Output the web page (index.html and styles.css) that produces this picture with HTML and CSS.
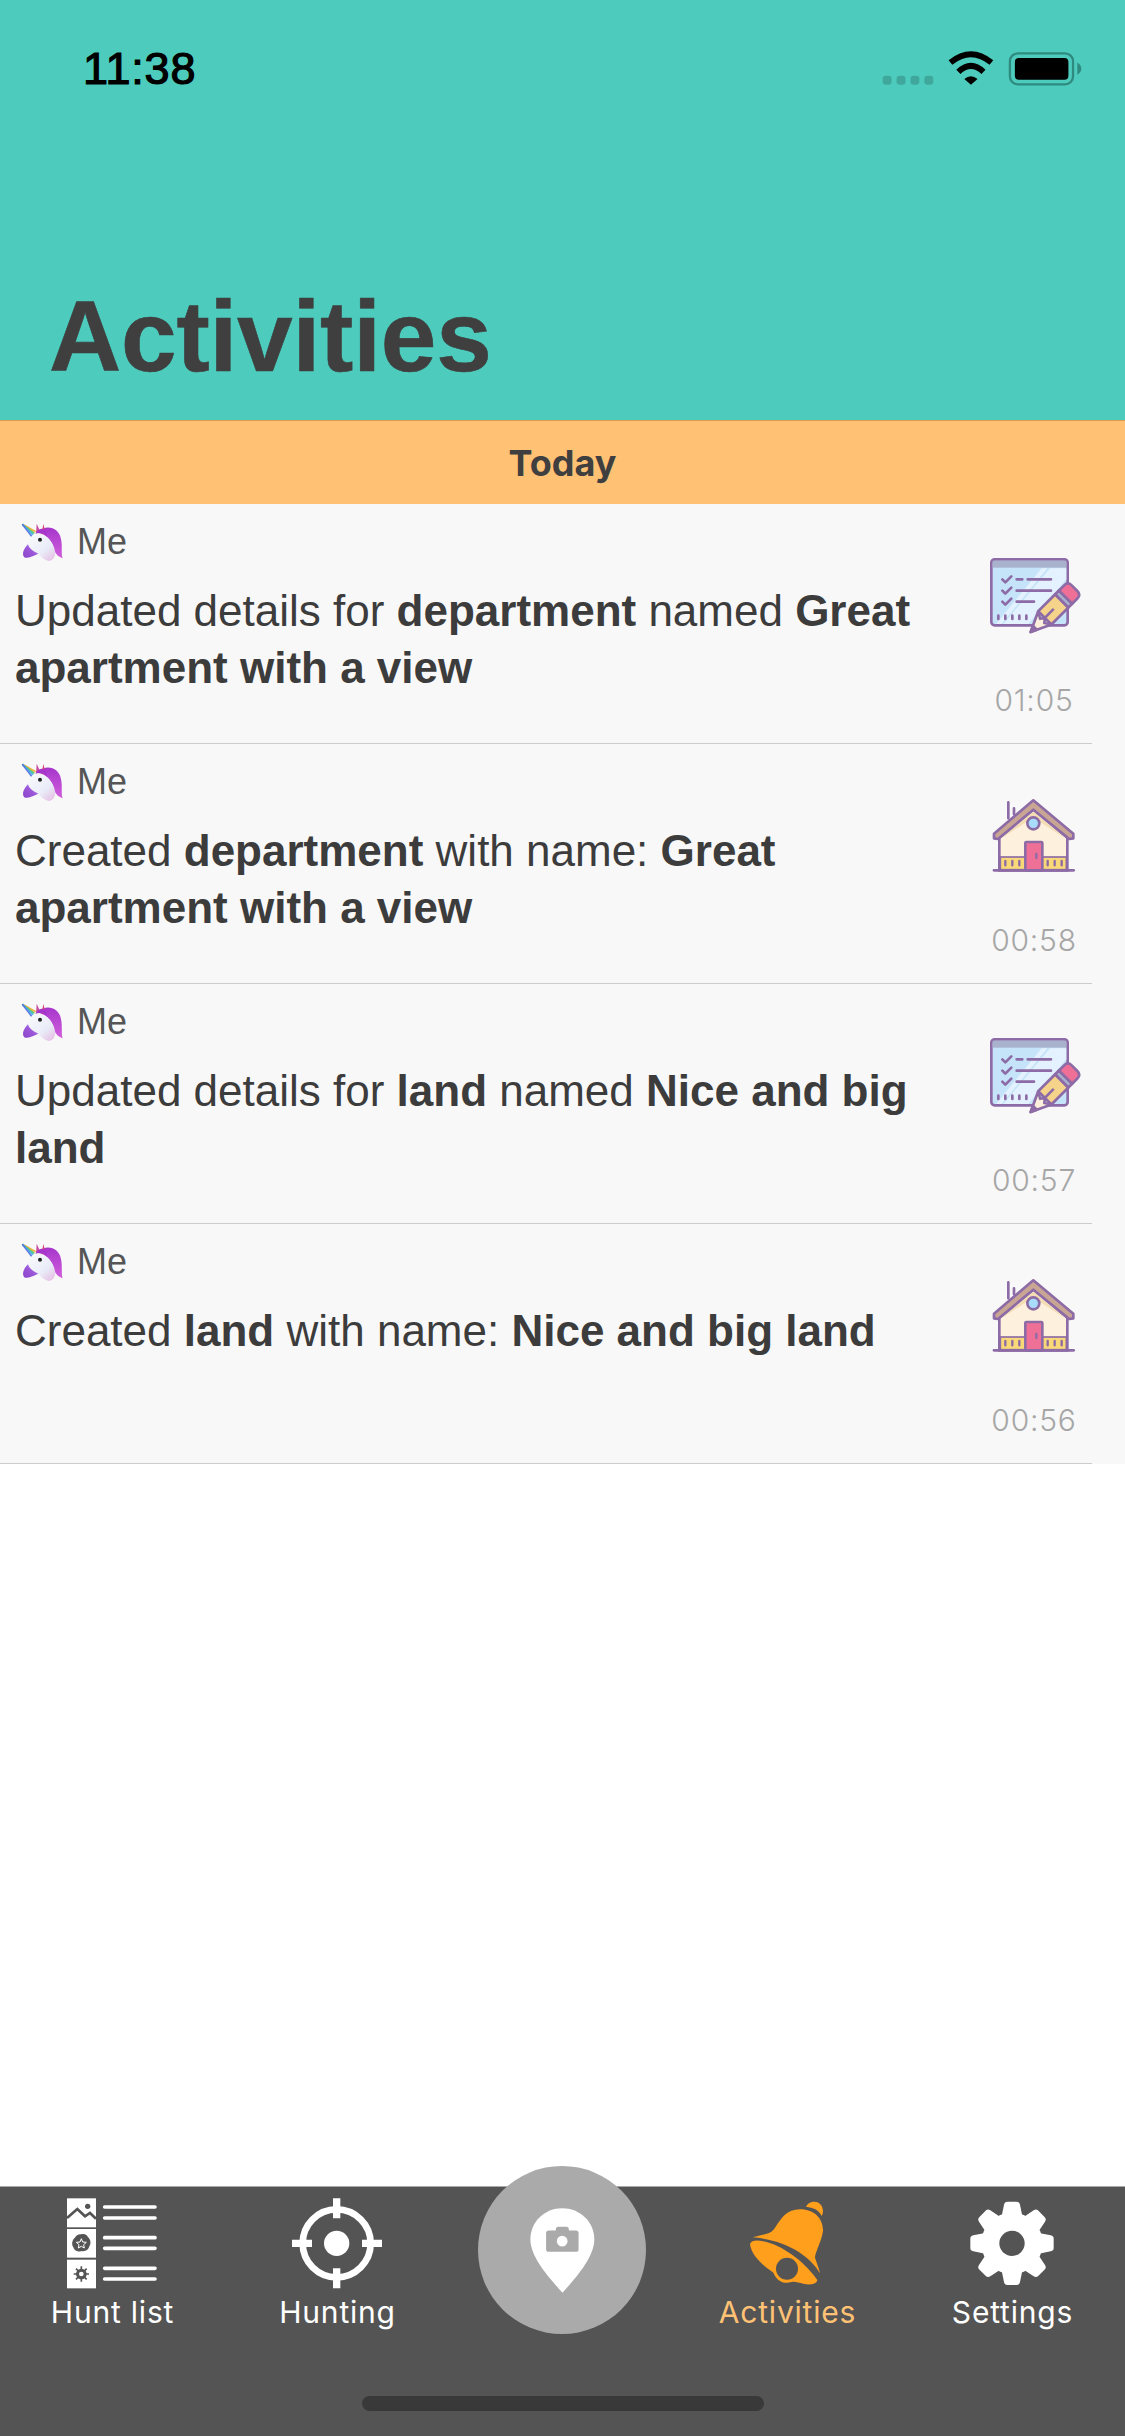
FILE: index.html
```html
<!DOCTYPE html>
<html>
<head>
  <title>Activities</title>
  <meta charset="utf8">
  <link rel="stylesheet" href="styles.css">
</head>
<body>
<svg class="sprite" xmlns="http://www.w3.org/2000/svg">
  <defs>
    <linearGradient id="faceGrad" x1="0" y1="0" x2="1" y2="1">
      <stop offset="0" stop-color="#ffffff"/>
      <stop offset="0.65" stop-color="#e9ecf8"/>
      <stop offset="1" stop-color="#e6b9e0"/>
    </linearGradient>
    <linearGradient id="maneGrad" x1="0" y1="0" x2="0" y2="1">
      <stop offset="0" stop-color="#a636cc"/>
      <stop offset="1" stop-color="#d05fdc"/>
    </linearGradient>
    <linearGradient id="noseGrad" x1="1" y1="0" x2="0" y2="1">
      <stop offset="0" stop-color="#c9a6ec"/>
      <stop offset="0.5" stop-color="#9a55d8"/>
      <stop offset="1" stop-color="#8a45c8"/>
    </linearGradient>
  </defs>
  <symbol id="unicorn" viewBox="60 60 135 126">
    <path d="M116 88C145 70 178 82 183 115C188 135 183 160 188 172C176 168 168 160 163 150C158 125 145 102 116 100Z" fill="url(#maneGrad)"/>
    <path d="M110 95C135 95 160 120 165 150C168 165 160 178 148 180C135 178 125 170 115 158C100 165 85 172 75 170C66 165 66 150 75 140C85 122 95 100 110 95Z" fill="url(#faceGrad)"/>
    <path d="M84 130C88 144 102 152 115 158C100 165 85 172 75 170C66 165 66 148 84 130Z" fill="url(#noseGrad)"/>
    <path d="M108 97L110 68L120 90Z" fill="#c94f9f"/>
    <path d="M125 100L130 68L137 97Z" fill="#d9457f"/>
    <path d="M106 98C115 84 125 80 138 88L142 106C130 96 120 94 106 98Z" fill="#a636cc"/>
    <path d="M67 70L107 92" stroke="#f2b13c" stroke-width="5"/>
    <path d="M67 70L103 97" stroke="#5cc46c" stroke-width="5"/>
    <path d="M67 70L99 101" stroke="#45b9e0" stroke-width="5"/>
    <path d="M67 70L95 106" stroke="#5a7be0" stroke-width="5"/>
    <circle cx="120" cy="116" r="6" fill="#222"/>
  </symbol>
  <symbol id="ic-edit" viewBox="75 60 288 270">
    <rect x="94" y="85" width="229" height="198" rx="10" fill="#c5e3f9" stroke="#8d6ba6" stroke-width="8"/>
    <path d="M130 279L270 112H319V145L205 279Z" fill="#e3f2fe"/>
    <path d="M108 279L245 112H262L125 279Z" fill="#e3f2fe"/>
    <rect x="98" y="89" width="221" height="21" fill="#a9b2cc"/>
    <g fill="none" stroke="#8d6ba6" stroke-width="8" stroke-linecap="round" stroke-linejoin="round">
      <path d="M127 145L136 154L154 136M127 179L136 188L154 170M127 212L136 221L154 203"/>
      <path d="M170 145H187M203 145H273M170 179H273M170 212H222"/>
      <path d="M115 254V264M136 254V264M157 254V264M178 254V264M199 254V264"/>
    </g>
    <g transform="translate(212 303) rotate(-45)" stroke="#8d6ba6" stroke-width="8" stroke-linejoin="round">
      <path d="M60 -28H132V28H60Z" fill="#f6d38a"/>
      <path d="M132 -28H148V28H132Z" fill="#a9b2cc"/>
      <path d="M148 -28H170Q186 -28 186 -12V12Q186 28 170 28H148Z" fill="#ef7096"/>
      <path d="M0 0L60 -28L48 -8L60 0L48 10L60 28Z" fill="#fdf0dc"/>
      <path d="M0 0L18 -8V8Z" fill="#8d6ba6"/>
      <path d="M60 0H98" fill="none"/>
    </g>
  </symbol>
  <symbol id="ic-house" viewBox="75 30 288 270">
    <path d="M145 64V112M162 82V100" stroke="#8d6ba6" stroke-width="8" stroke-linecap="round"/>
    <path d="M118 170L220 85L322 170V268H118Z" fill="#fdf0dc" stroke="#8d6ba6" stroke-width="8"/>
    <path d="M124 172L220 92L316 172L220 110Z" fill="#f4dcb3"/>
    <path d="M102 158L220 58L340 158V172L328 174L220 86L114 174L102 172Z" fill="#c9a594" stroke="#8d6ba6" stroke-width="8" stroke-linejoin="round"/>
    <rect x="121" y="228" width="198" height="38" fill="#f9d977" stroke="#8d6ba6" stroke-width="5"/>
    <path d="M136 240V253M157 240V253M178 240V253M263 240V253M284 240V253M305 240V253" stroke="#8d6ba6" stroke-width="7" stroke-linecap="round"/>
    <rect x="196" y="183" width="51" height="85" rx="3" fill="#ef7096" stroke="#8d6ba6" stroke-width="8"/>
    <path d="M229 219V231" stroke="#8d6ba6" stroke-width="7" stroke-linecap="round"/>
    <circle cx="220" cy="127" r="18" fill="#a9dcfb" stroke="#8d6ba6" stroke-width="8"/>
    <path d="M102 268H341" stroke="#8d6ba6" stroke-width="8" stroke-linecap="round"/>
  </symbol>
</svg>

<div class="screen">
  <header class="top">
    <div class="status">
      <span class="clock">11:38</span>
      <svg class="status-icons" viewBox="60 30 610 115">
        <g fill="#3fa79b">
          <rect x="66" y="108" width="27" height="27" rx="10"/>
          <rect x="108" y="108" width="27" height="27" rx="10"/>
          <rect x="150" y="108" width="27" height="27" rx="10"/>
          <rect x="192" y="108" width="27" height="27" rx="10"/>
        </g>
        <path d="M271 68Q333 18 395 68M295 96Q333 60 371 96" fill="none" stroke="#000" stroke-width="18"/>
        <path d="M313 118L333 135L353 118Q333 101 313 118Z" fill="#000"/>
        <rect x="451" y="40" width="191" height="94" rx="24" fill="none" stroke="#2f8a80" stroke-width="7"/>
        <rect x="466" y="54" width="162" height="66" rx="12" fill="#000"/>
        <path d="M655 68Q667 75 667 87Q667 98 655 105Z" fill="#2f8a80"/>
      </svg>
    </div>
    <h1 class="title">Activities</h1>
  </header>

  <div class="day">Today</div>

  <main class="list">
    <div class="row">
      <div class="row-in">
        <div class="row-main">
          <div class="who"><svg class="avatar"><use href="#unicorn"/></svg><span>Me</span></div>
          <p class="msg">Updated details for <b>department</b> named <b>Great</b> <b>apartment with a view</b></p>
        </div>
        <div class="row-side">
          <svg class="kind"><use href="#ic-edit"/></svg>
          <span class="time">01:05</span>
        </div>
      </div>
    </div>
    <div class="row">
      <div class="row-in">
        <div class="row-main">
          <div class="who"><svg class="avatar"><use href="#unicorn"/></svg><span>Me</span></div>
          <p class="msg">Created <b>department</b> with name: <b>Great</b> <b>apartment with a view</b></p>
        </div>
        <div class="row-side">
          <svg class="kind"><use href="#ic-house"/></svg>
          <span class="time">00:58</span>
        </div>
      </div>
    </div>
    <div class="row">
      <div class="row-in">
        <div class="row-main">
          <div class="who"><svg class="avatar"><use href="#unicorn"/></svg><span>Me</span></div>
          <p class="msg">Updated details for <b>land</b> named <b>Nice and big</b> <b>land</b></p>
        </div>
        <div class="row-side">
          <svg class="kind"><use href="#ic-edit"/></svg>
          <span class="time">00:57</span>
        </div>
      </div>
    </div>
    <div class="row">
      <div class="row-in">
        <div class="row-main">
          <div class="who"><svg class="avatar"><use href="#unicorn"/></svg><span>Me</span></div>
          <p class="msg">Created <b>land</b> with name: <b>Nice and big land</b></p>
        </div>
        <div class="row-side">
          <svg class="kind"><use href="#ic-house"/></svg>
          <span class="time">00:56</span>
        </div>
      </div>
    </div>
  </main>

  <nav class="tabbar">
    <div class="tabs">
      <div class="tab">
        <svg class="tab-ic" viewBox="195 140 285 285">
          <g fill="#fff">
            <rect x="201" y="147" width="87" height="87"/>
            <rect x="201" y="239" width="87" height="86"/>
            <rect x="201" y="331" width="87" height="86"/>
          </g>
          <path d="M314 173H465M314 206H465M314 265H465M314 297H465M314 357H465M314 389H465" stroke="#fff" stroke-width="11" stroke-linecap="round"/>
          <path d="M201 206L232 179L255 201L270 191L288 208" fill="none" stroke="#545454" stroke-width="8"/>
          <circle cx="263" cy="171" r="8" fill="#545454"/>
          <path d="M244 255C254 252 262 258 264 264C272 270 274 284 268 291C266 302 254 308 244 305C232 310 222 302 220 294C214 286 216 272 224 266C228 258 236 254 244 255Z" fill="#545454"/>
          <path d="M244 268L248 278L259 279L251 286L253 296L244 291L235 296L237 286L229 279L240 278Z" fill="none" stroke="#fff" stroke-width="3"/>
          <path d="M244 351V397M221 374H267M228 358L260 390M260 358L228 390" stroke="#545454" stroke-width="5"/>
          <circle cx="244" cy="374" r="16" fill="#545454"/>
          <circle cx="244" cy="374" r="7" fill="#fff"/>
        </svg>
        <span class="tab-label">Hunt list</span>
      </div>
      <div class="tab">
        <svg class="tab-ic" viewBox="870 140 285 285">
          <circle cx="1010" cy="282" r="102" fill="none" stroke="#fff" stroke-width="20"/>
          <circle cx="1010" cy="282" r="38" fill="#fff"/>
          <path d="M1010 147V207M1010 357V417M876 282H936M1086 282H1146" stroke="#fff" stroke-width="22"/>
        </svg>
        <span class="tab-label">Hunting</span>
      </div>
      <div class="tab"></div>
      <div class="tab">
        <svg class="tab-ic" viewBox="120 140 285 285">
          <path d="M318 172C325 155 355 150 365 170C372 185 368 195 365 200C355 180 340 175 318 172Z" fill="#ff9f1c"/>
          <path d="M158 264C190 255 210 255 222 240C245 205 260 180 300 180C345 180 370 210 369 245C365 275 345 310 345 325C350 340 358 360 360 372C330 320 260 272 158 264Z" fill="#ff9f1c"/>
          <path d="M150 285C155 270 175 272 200 278C260 295 320 345 352 392C350 405 330 408 310 403C295 400 285 395 275 398C250 405 230 395 220 370C190 350 155 320 150 285Z" fill="#ff9f1c"/>
          <circle cx="261" cy="358" r="33" fill="#545454"/>
        </svg>
        <span class="tab-label tab-on">Activities</span>
      </div>
      <div class="tab">
        <svg class="tab-ic" viewBox="795 140 285 285">
          <circle cx="936" cy="282" r="92" fill="#fff"/>
          <g fill="#fff">
            <path d="M912 166Q914 157 922 157H950Q958 157 960 166L968 205H904Z"/>
            <path transform="rotate(45 936 282)" d="M912 166Q914 157 922 157H950Q958 157 960 166L968 205H904Z"/>
            <path transform="rotate(90 936 282)" d="M912 166Q914 157 922 157H950Q958 157 960 166L968 205H904Z"/>
            <path transform="rotate(135 936 282)" d="M912 166Q914 157 922 157H950Q958 157 960 166L968 205H904Z"/>
            <path transform="rotate(180 936 282)" d="M912 166Q914 157 922 157H950Q958 157 960 166L968 205H904Z"/>
            <path transform="rotate(225 936 282)" d="M912 166Q914 157 922 157H950Q958 157 960 166L968 205H904Z"/>
            <path transform="rotate(270 936 282)" d="M912 166Q914 157 922 157H950Q958 157 960 166L968 205H904Z"/>
            <path transform="rotate(315 936 282)" d="M912 166Q914 157 922 157H950Q958 157 960 166L968 205H904Z"/>
          </g>
          <circle cx="936" cy="282" r="38" fill="#545454"/>
        </svg>
        <span class="tab-label">Settings</span>
      </div>
    </div>
    <div class="home-bar"></div>
  </nav>

  <div class="cam-btn">
    <svg class="cam-ic" viewBox="322 165 212 272">
      <path d="M427 175C480 175 523 215 523 268C523 320 470 380 428 427C385 380 332 320 332 268C332 215 375 175 427 175Z" fill="#fff"/>
      <path d="M408 241V238Q408 230 416 230H439Q447 230 447 238V241H468Q476 241 476 249V297Q476 305 468 305H387Q379 305 379 297V249Q379 241 387 241Z" fill="#aaa"/>
      <circle cx="427" cy="273" r="16" fill="#fff"/>
    </svg>
  </div>
</div>
</body>
</html>
```

FILE: styles.css
```css
html, body {
  margin: 0;
  padding: 0;
  background: #fff;
}
.sprite {
  position: absolute;
  width: 0;
  height: 0;
}
.screen {
  position: relative;
  display: flex;
  flex-direction: column;
  width: 1125px;
  height: 2436px;
  overflow: hidden;
  font-family: "Liberation Sans", Arial, sans-serif;
  color: #3c3c3c;
}

/* header */
.top {
  display: flex;
  flex-direction: column;
  height: 420px;
  background: #4dccbd;
}
.status {
  display: flex;
  justify-content: space-between;
  align-items: flex-start;
  padding: 50px 42px 0 83px;
}
.clock {
  font-size: 45px;
  line-height: 38px;
  letter-spacing: 0.8px;
  -webkit-text-stroke: 1.2px #000;
  color: #000;
}
.status-icons {
  width: 203px;
  height: 38px;
}
.title {
  margin: auto 0 34px 49px;
  font-size: 100px;
  line-height: 100px;
  font-weight: bold;
  letter-spacing: -0.2px;
  -webkit-text-stroke: 0.6px #3f3f3f;
  color: #3f3f3f;
}

.day {
  display: flex;
  align-items: center;
  justify-content: center;
  height: 83px;
  border-top: 1px solid #dc9a4d;
  background: #ffc274;
  font-family: Inter, sans-serif;
  font-size: 36px;
  font-weight: 700;
  color: #3f3f3f;
}

/* list */
.list {
  flex: 1;
}
.row {
  background: #f8f8f8;
}
.row-in {
  display: flex;
  box-sizing: border-box;
  width: 1092px;
  height: 240px;
  padding: 0 10px 0 15px;
  border-bottom: 1px solid #ccc;
}
.row-main {
  flex: 1;
  padding-top: 17px;
}
.who {
  display: flex;
  align-items: center;
  gap: 12px;
  padding-left: 5px;
  font-size: 36px;
  color: #555;
}
.avatar {
  width: 45px;
  height: 42px;
}
.msg {
  width: 935px;
  margin: 19px 0 0;
  font-size: 44px;
  line-height: 57px;
  color: #3c3c3c;
}
.row-side {
  display: flex;
  flex-direction: column;
  align-items: center;
  width: 96px;
  padding-top: 47px;
}
.kind {
  width: 96px;
  height: 90px;
  margin-right: 3px;
}
.time {
  margin-top: 41px;
  font-family: Inter, sans-serif;
  font-size: 30px;
  font-weight: 300;
  line-height: 36px;
  letter-spacing: 0.8px;
  color: #a6a6a6;
}

/* bottom bar */
.tabbar {
  height: 250px;
  box-sizing: border-box;
  border-top: 1px solid #aaa;
  background: #545454;
  padding-top: 9px;
}
.tabs {
  display: flex;
}
.tab {
  display: flex;
  flex-direction: column;
  align-items: center;
  width: 225px;
}
.tab-ic {
  width: 95px;
  height: 95px;
}
.tab-label {
  margin-top: 3px;
  font-family: Inter, sans-serif;
  font-size: 30px;
  line-height: 36px;
  letter-spacing: 0.8px;
  color: #fff;
}
.tab-on {
  color: #ffc274;
}
.home-bar {
  width: 402px;
  height: 15px;
  margin: 66px auto 0;
  border-radius: 8px;
  background: #393939;
}
.cam-btn {
  position: absolute;
  left: 478px;
  bottom: 102px;
  display: flex;
  align-items: center;
  justify-content: center;
  width: 168px;
  height: 168px;
  border-radius: 50%;
  background: #aaa;
}
.cam-ic {
  width: 71px;
  height: 91px;
}
```
